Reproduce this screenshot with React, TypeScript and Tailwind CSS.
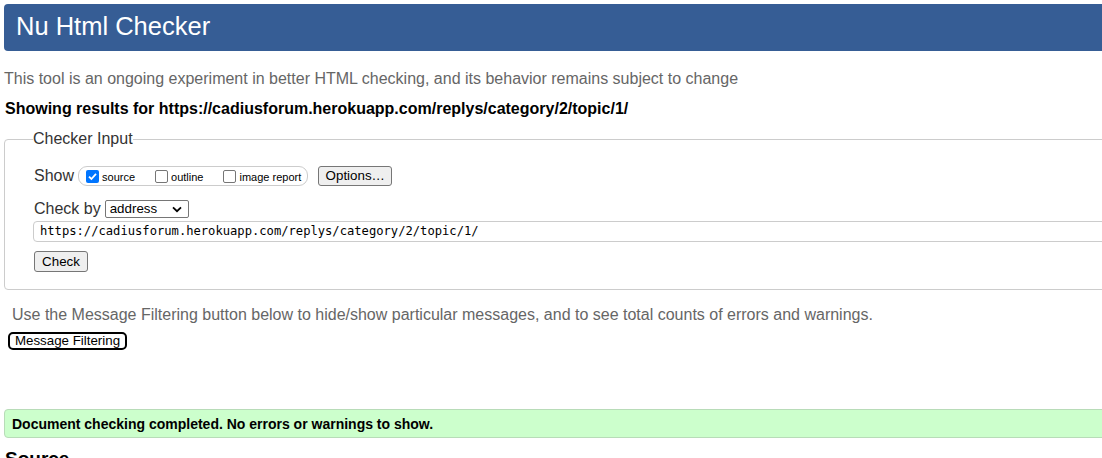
import React from "react";

const URL = "https://cadiusforum.herokuapp.com/replys/category/2/topic/1/";

function Box({ checked, label }: { checked?: boolean; label: string }) {
  return (
    <label className="flex items-center gap-[3px]">
      {checked ? (
        <span className="w-[13px] h-[13px] rounded-[2px] bg-[#0075ff] flex items-center justify-center">
          <svg width="11" height="11" viewBox="0 0 11 11">
            <path d="M2 5.6 L4.4 8 L9 2.8" fill="none" stroke="#fff" strokeWidth="1.8" />
          </svg>
        </span>
      ) : (
        <span className="w-[13px] h-[13px] rounded-[2px] border border-[#767676] bg-white" />
      )}
      <span className="text-[11px] leading-[13px] text-black mt-[2px]">{label}</span>
    </label>
  );
}

export default function App() {
  return (
    <div className="w-[1102px] h-[458px] overflow-hidden bg-white font-['Liberation_Sans',Arial,sans-serif]">
      <div className="w-[1140px] pt-[4px] pl-[4px]">
        {/* header */}
        <div className="h-[47px] bg-[#365d95] rounded-l-[4px] flex items-center pl-[12px]">
          <h1 className="text-[25.5px] leading-none text-white mt-[-1px]">Nu Html Checker</h1>
        </div>

        <p className="mt-[19px] text-[16px] leading-[18px] text-[#666]">
          This tool is an ongoing experiment in better HTML checking, and its behavior remains subject to change
        </p>
        <p className="mt-[12px] ml-[1px] text-[16px] leading-[18px] font-bold text-black">
          Showing results for {URL}
        </p>

        {/* checker input */}
        <fieldset className="mt-[12px] border border-[#ccc] rounded-l-[4px] pl-[28px] pb-[16px]">
          <legend className="text-[16px] leading-[18px] text-[#333]">Checker Input</legend>

          <div className="mt-[18px] ml-[1px] h-[20px] flex items-center">
            <span className="text-[16px] leading-[18px] text-[#333]">Show</span>
            <div className="ml-[4px] h-[20px] border border-[#ccc] rounded-[9px] flex items-center gap-[20px] pl-[7px] pr-[6px]">
              <Box checked label="source" />
              <Box label="outline" />
              <Box label="image report" />
            </div>
            <button className="ml-[10px] w-[74px] h-[20px] bg-[#efefef] border border-[#767676] rounded-[3px] text-[13.33px] leading-none text-black">
              Options…
            </button>
          </div>

          <div className="mt-[14px] ml-[1px] h-[18px] flex items-center">
            <span className="text-[16px] leading-[18px] text-[#333]">Check by</span>
            <div className="ml-[4px] w-[84px] h-[18px] border border-[#767676] rounded-[2px] flex items-center justify-between pl-[4px] pr-[6px]">
              <span className="text-[13.33px] leading-none text-black">address</span>
              <svg width="10" height="7" viewBox="0 0 10 7">
                <path d="M1 1.3 L5 5.2 L9 1.3" fill="none" stroke="#000" strokeWidth="1.8" />
              </svg>
            </div>
          </div>

          <div className="mt-[3px] h-[21px] border border-[#ccc] rounded-l-[4px] flex items-center pl-[6px]">
            <span className="font-['DejaVu_Sans_Mono','Liberation_Mono',monospace] text-[12.15px] leading-none text-black">
              {URL}
            </span>
          </div>

          <button className="mt-[9px] ml-[1px] w-[54px] h-[21px] bg-[#efefef] border border-[#767676] rounded-[3px] text-[13.33px] leading-none text-black">
            Check
          </button>
        </fieldset>

        <p className="mt-[16px] ml-[8px] text-[16px] leading-[18px] text-[#666]">
          Use the Message Filtering button below to hide/show particular messages, and to see total counts of errors and warnings.
        </p>
        <button className="mt-[8px] ml-[4px] w-[119px] h-[18px] bg-white border-2 border-black rounded-[5px] text-[13.33px] leading-none text-black">
          Message Filtering
        </button>

        {/* result */}
        <div className="mt-[57px] h-[29px] bg-[#ccffcc] border border-[#b8dcb8] rounded-l-[4px] flex items-center pl-[7px]">
          <span className="text-[14px] leading-none font-bold text-black">
            Document checking completed. No errors or warnings to show.
          </span>
        </div>

        <h2 className="mt-[10px] ml-[1px] text-[19px] leading-[22px] font-bold text-black">Source</h2>
      </div>
    </div>
  );
}
